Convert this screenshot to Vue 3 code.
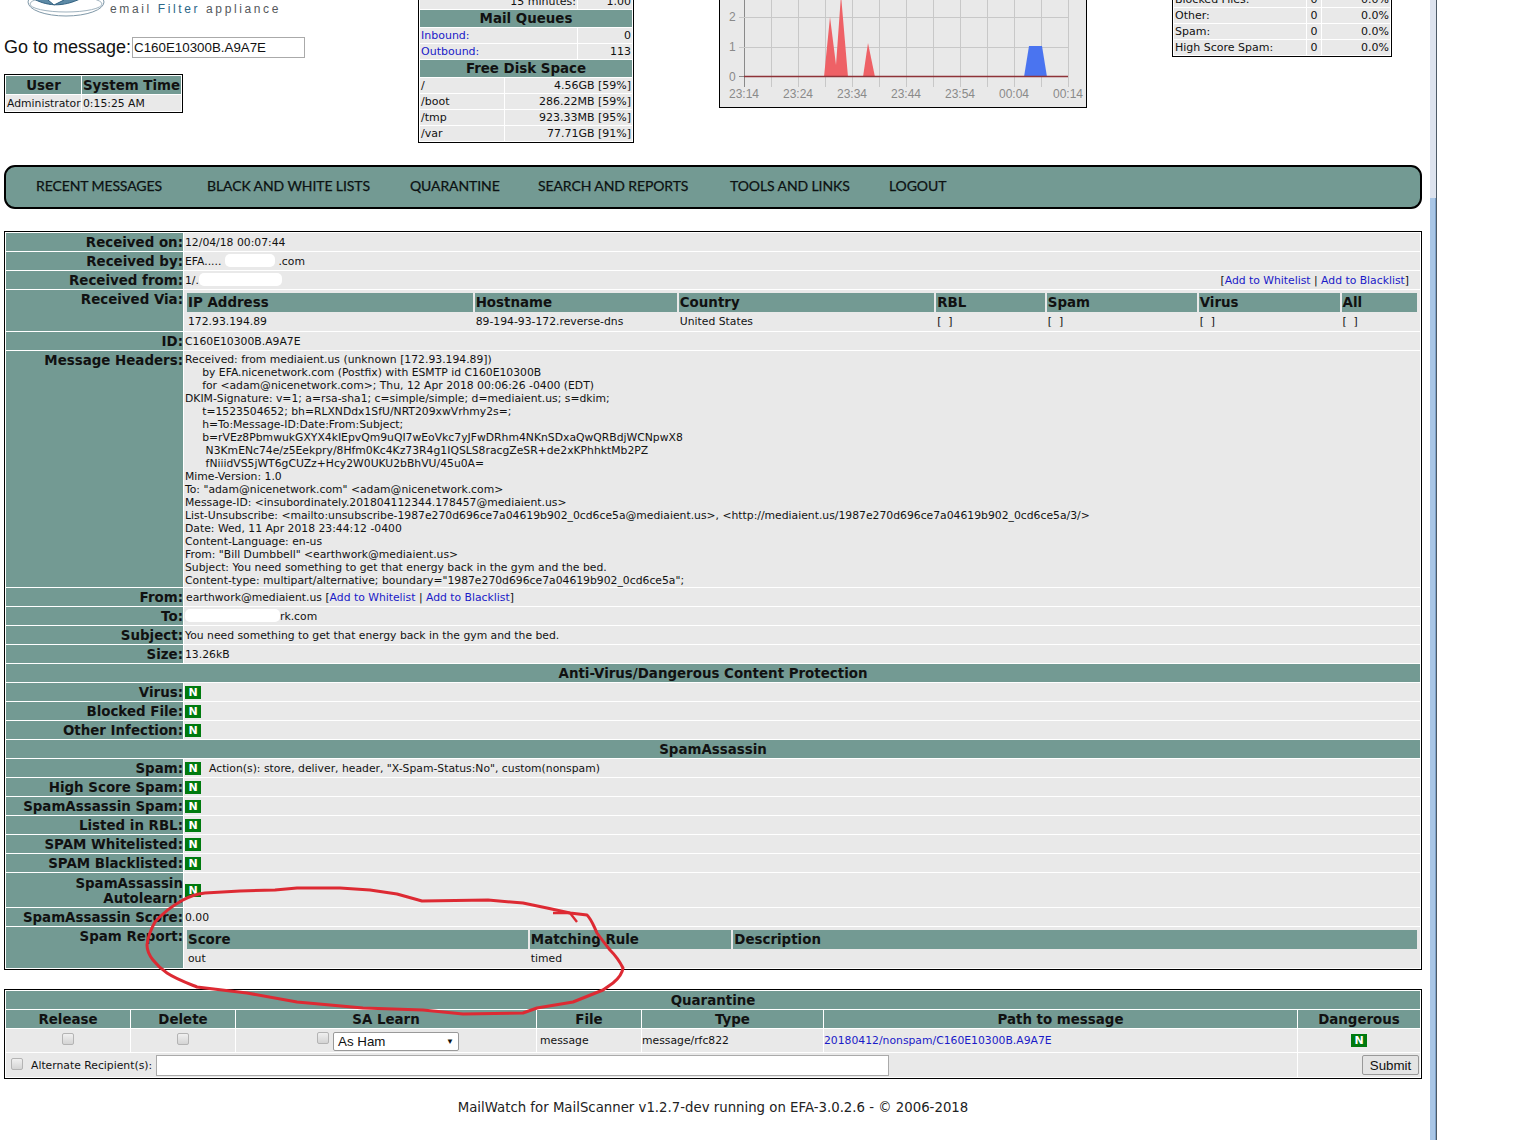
<script setup>
const navItems = ['RECENT MESSAGES', 'BLACK AND WHITE LISTS', 'QUARANTINE', 'SEARCH AND REPORTS', 'TOOLS AND LINKS', 'LOGOUT']
const disks = [['/', '4.56GB [59%]'], ['/boot', '286.22MB [59%]'], ['/tmp', '923.33MB [95%]'], ['/var', '77.71GB [91%]']]
const stats = [['Blocked Files:', '0', '0.0%'], ['Other:', '0', '0.0%'], ['Spam:', '0', '0.0%'], ['High Score Spam:', '0', '0.0%']]
const gridX = Array.from({ length: 13 }, (_, i) => 744.5 + i * 27 - 719)
const times = ['23:14', '23:24', '23:34', '23:44', '23:54', '00:04', '00:14']
const headers = `Received: from mediaient.us (unknown [172.93.194.89])
     by EFA.nicenetwork.com (Postfix) with ESMTP id C160E10300B
     for <adam@nicenetwork.com>; Thu, 12 Apr 2018 00:06:26 -0400 (EDT)
DKIM-Signature: v=1; a=rsa-sha1; c=simple/simple; d=mediaient.us; s=dkim;
     t=1523504652; bh=RLXNDdx1SfU/NRT209xwVrhmy2s=;
     h=To:Message-ID:Date:From:Subject;
     b=rVEz8PbmwukGXYX4kIEpvQm9uQI7wEoVkc7yJFwDRhm4NKnSDxaQwQRBdjWCNpwX8
      N3KmENc74e/z5Eekpry/8Hfm0Kc4Kz73R4g1IQSLS8racgZeSR+de2xKPhhktMb2PZ
      fNiiidVS5jWT6gCUZz+Hcy2W0UKU2bBhVU/45u0A=
Mime-Version: 1.0
To: "adam@nicenetwork.com" <adam@nicenetwork.com>
Message-ID: <insubordinately.201804112344.178457@mediaient.us>
List-Unsubscribe: <mailto:unsubscribe-1987e270d696ce7a04619b902_0cd6ce5a@mediaient.us>, <http://mediaient.us/1987e270d696ce7a04619b902_0cd6ce5a/3/>
Date: Wed, 11 Apr 2018 23:44:12 -0400
Content-Language: en-us
From: "Bill Dumbbell" <earthwork@mediaient.us>
Subject: You need something to get that energy back in the gym and the bed.
Content-type: multipart/alternative; boundary="1987e270d696ce7a04619b902_0cd6ce5a";`
const avRows = ['Virus:', 'Blocked File:', 'Other Infection:']
const saRows = ['High Score Spam:', 'SpamAssassin Spam:', 'Listed in RBL:', 'SPAM Whitelisted:', 'SPAM Blacklisted:']
const viaCols = [
  ['IP Address', '172.93.194.89', 284], ['Hostname', '89-194-93-172.reverse-dns', 201], ['Country', 'United States', 254],
  ['RBL', '[  ]', 108], ['Spam', '[  ]', 149], ['Virus', '[  ]', 140], ['All', '[  ]', 75]
]
const reportCols = [['Score', 'out', 340], ['Matching Rule', 'timed', 201], ['Description', '', 682]]
</script>

<template>
  <div class="screen">
    <div class="page">
      <header class="top">
        <div class="brand">
          <div class="logo">
            <svg class="logo-mark" width="88" height="18" viewBox="0 0 88 18">
              <ellipse cx="42" cy="2" rx="38" ry="14" fill="none" stroke="#7f98a8" stroke-width="1" />
              <ellipse cx="42" cy="4" rx="36" ry="8" fill="none" stroke="#9fb2be" stroke-width="1" />
              <path d="M8 -2 C22 6 38 8 58 -2" fill="#5d8aa6" stroke="#2f5f7f" />
              <path d="M24 0 L30 5 L40 0" fill="#fff" stroke="#2f5f7f" />
            </svg>
            <span class="tagline">email <b>Filter</b> appliance</span>
          </div>
          <div class="goto">
            <span>Go to message:</span>
            <input class="goto-input" value="C160E10300B.A9A7E" readonly />
          </div>
          <table class="box user-box">
            <tbody>
              <tr><th>User</th><th>System Time</th></tr>
              <tr><td>Administrator</td><td>0:15:25 AM</td></tr>
            </tbody>
          </table>
        </div>

        <div class="clip clip-mid">
          <table class="box mid-box">
            <colgroup><col class="c1" /><col class="c2" /><col class="c3" /></colgroup>
            <tbody>
              <tr><td colspan="2" class="right">15 minutes:</td><td class="right">1.00</td></tr>
              <tr><th colspan="3">Mail Queues</th></tr>
              <tr><td colspan="2"><a>Inbound:</a></td><td class="right">0</td></tr>
              <tr><td colspan="2"><a>Outbound:</a></td><td class="right">113</td></tr>
              <tr><th colspan="3">Free Disk Space</th></tr>
              <tr v-for="d in disks" :key="d[0]"><td>{{ d[0] }}</td><td colspan="2" class="right">{{ d[1] }}</td></tr>
            </tbody>
          </table>
        </div>

        <div class="clip clip-chart">
          <svg class="chart" width="368" height="108" viewBox="0 0 368 108">
            <rect x="0.5" y="-2" width="367" height="109.5" fill="#e9e9e9" stroke="#000" />
            <line v-for="x in gridX" :key="x" :x1="x" :x2="x" y1="0" y2="87" stroke="#c8c8c8" />
            <line x1="25.5" x2="25.5" y1="0" y2="87" stroke="#8a8a8a" />
            <line x1="20" x2="349" y1="17.5" y2="17.5" stroke="#c8c8c8" />
            <line x1="20" x2="349" y1="47.5" y2="47.5" stroke="#c8c8c8" />
            <line x1="20" x2="26" y1="76.5" y2="76.5" stroke="#8a8a8a" />
            <polygon points="105,77 111,17 117,65 122,-5 129,77" fill="#ee6166" />
            <polygon points="144,77 149,43 156,77" fill="#ee6166" />
            <polygon points="305,77 310,46 323,46 328,77" fill="#4a74f0" />
            <line x1="25" x2="349" y1="76.5" y2="76.5" stroke="#8e3338" stroke-width="1.4" />
            <text x="10" y="21" class="tick">2</text>
            <text x="10" y="51" class="tick">1</text>
            <text x="10" y="81" class="tick">0</text>
            <text v-for="(t, i) in times" :key="t" :x="10 + i * 54" y="98" class="tick">{{ t }}</text>
          </svg>
        </div>

        <div class="clip clip-right">
          <table class="box right-box">
            <colgroup><col class="r1" /><col class="r2" /><col class="r3" /></colgroup>
            <tbody>
              <tr v-for="s in stats" :key="s[0]"><td>{{ s[0] }}</td><td class="center">{{ s[1] }}</td><td class="right">{{ s[2] }}</td></tr>
            </tbody>
          </table>
        </div>
      </header>

      <nav class="nav">
        <span v-for="n in navItems" :key="n">{{ n }}</span>
      </nav>

      <table class="box main">
        <colgroup><col class="lab" /><col /></colgroup>
        <tbody>
          <tr><th>Received on:</th><td>12/04/18 00:07:44</td></tr>
          <tr><th>Received by:</th><td>EFA.....<i class="blot b1"></i>.com</td></tr>
          <tr><th>Received from:</th><td><div class="split"><span>1/.<i class="blot b2"></i></span><span class="wl">[<a>Add to Whitelist</a> | <a>Add to Blacklist</a>]</span></div></td></tr>
          <tr>
            <th>Received Via:</th>
            <td class="nest via-cell">
              <table class="inner">
                <colgroup><col v-for="c in viaCols" :key="c[0]" :style="{ width: c[2] + 'px' }" /></colgroup>
                <tbody>
                  <tr><th v-for="c in viaCols" :key="c[0]">{{ c[0] }}</th></tr>
                  <tr class="short"><td v-for="c in viaCols" :key="c[0]">{{ c[1] }}</td></tr>
                </tbody>
              </table>
            </td>
          </tr>
          <tr><th>ID:</th><td>C160E10300B.A9A7E</td></tr>
          <tr><th>Message Headers:</th><td class="headers">{{ headers }}</td></tr>
          <tr><th>From:</th><td><span class="from">earthwork@mediaient.us [<a>Add to Whitelist</a> | <a>Add to Blacklist</a>]</span></td></tr>
          <tr><th>To:</th><td><i class="blot b3"></i>rk.com</td></tr>
          <tr><th>Subject:</th><td>You need something to get that energy back in the gym and the bed.</td></tr>
          <tr><th>Size:</th><td>13.26kB</td></tr>
          <tr><th colspan="2" class="sect">Anti-Virus/Dangerous Content Protection</th></tr>
          <tr v-for="r in avRows" :key="r"><th>{{ r }}</th><td><span class="badge">N</span></td></tr>
          <tr><th colspan="2" class="sect">SpamAssassin</th></tr>
          <tr><th>Spam:</th><td><span class="badge">N</span><span class="action">Action(s): store, deliver, header, "X-Spam-Status:No", custom(nonspam)</span></td></tr>
          <tr v-for="r in saRows" :key="r"><th>{{ r }}</th><td><span class="badge">N</span></td></tr>
          <tr class="tall"><th>SpamAssassin Autolearn:</th><td><span class="badge">N</span></td></tr>
          <tr><th>SpamAssassin Score:</th><td>0.00</td></tr>
          <tr>
            <th>Spam Report:</th>
            <td class="nest report-cell">
              <table class="inner">
                <colgroup><col v-for="c in reportCols" :key="c[0]" :style="{ width: c[2] + 'px' }" /></colgroup>
                <tbody>
                  <tr><th v-for="c in reportCols" :key="c[0]">{{ c[0] }}</th></tr>
                  <tr><td v-for="c in reportCols" :key="c[0]">{{ c[1] }}</td></tr>
                </tbody>
              </table>
            </td>
          </tr>
        </tbody>
      </table>

      <table class="box quar">
        <colgroup>
          <col class="q1" /><col class="q2" /><col class="q3" /><col class="q4" /><col class="q5" /><col class="q6" /><col />
        </colgroup>
        <tbody>
          <tr><th colspan="7">Quarantine</th></tr>
          <tr><th>Release</th><th>Delete</th><th>SA Learn</th><th>File</th><th>Type</th><th>Path to message</th><th>Dangerous</th></tr>
          <tr class="data">
            <td class="center"><span class="check"></span></td>
            <td class="center"><span class="check"></span></td>
            <td>
              <div class="learn"><span class="check"></span><div class="select"><span>As Ham</span><span class="arrow">▼</span></div></div>
            </td>
            <td class="file">message</td>
            <td>message/rfc822</td>
            <td><a>20180412/nonspam/C160E10300B.A9A7E</a></td>
            <td class="center"><span class="badge">N</span></td>
          </tr>
          <tr class="last">
            <td colspan="6">
              <div class="alt"><span class="check"></span><span class="alt-label">Alternate Recipient(s):</span><input class="alt-input" readonly /></div>
            </td>
            <td class="right"><button class="submit" type="button">Submit</button></td>
          </tr>
        </tbody>
      </table>

      <footer class="foot">MailWatch for MailScanner v1.2.7-dev running on EFA-3.0.2.6 - © 2006-2018</footer>
    </div>
    <div class="scrollbar"><div class="thumb"></div></div>

    <svg class="scribble" width="700" height="160" viewBox="130 880 700 160">
      <path d="M183 900 C190 896 197 894 205 893 L240 891 L275 890 L297 888 L340 888 L370 890 L397 894 L422 901 L488 900 L523 903 L547 908 L570 913 L587 915 C592 920 594 927 597 933 C602 940 606 945 610 950 C616 956 620 962 623 968 C622 975 618 979 613 983 L603 990 L573 1002 L537 1008 L523 1013 L463 1014 L423 1010 L363 1008 L297 1002 L247 993 L197 987 C187 983 176 979 167 973 C161 969 157 965 153 960 C149 955 147 950 147 945 C148 937 151 929 155 922 C162 914 172 906 183 900 Z" fill="none" stroke="#dd2a33" stroke-width="3" stroke-linejoin="round" />
      <path d="M553 913 L570 913 L577 922" fill="none" stroke="#dd2a33" stroke-width="2.4" />
    </svg>
  </div>
</template>

<style>
html, body { margin: 0; background: #fff; }
</style>

<style scoped>
.screen {
  position: relative;
  display: flex;
  width: 1536px;
  height: 1140px;
  overflow: hidden;
  background: #fff;
  font-family: "DejaVu Sans", Verdana, sans-serif;
  font-size: 10.8px;
  color: #111;
}
.page { width: 1426px; margin-left: 4px; flex: none; }
.scrollbar {
  flex: none;
  width: 6px;
  height: 1140px;
  background: #dde3ee;
  border-right: 1px solid #4d5a66;
}
.thumb { margin-top: 198px; height: 942px; background: #a9c6e6; border-right: 1px solid #7ea1c8; box-sizing: border-box; }

table { border-collapse: separate; }
th, td { padding: 0; }
a { color: #1a1ac8; }
.right { text-align: right; }
.center { text-align: center; }

.top { display: flex; height: 165px; align-items: flex-start; }
.brand { width: 414px; flex: none; height: 165px; }
.logo { height: 18px; display: flex; overflow: hidden; margin-left: 20px; }
.logo-mark { flex: none; }
.tagline {
  margin-left: -2px;
  margin-top: 2px;
  font-family: "Liberation Sans", Arial, sans-serif;
  font-size: 12px;
  letter-spacing: 2.62px;
  color: #55585c;
  white-space: nowrap;
  line-height: 14px;
}
.tagline b { font-weight: 400; color: #2c6788; }
.goto {
  margin-top: 19px;
  display: flex;
  align-items: center;
  gap: 1px;
  font-family: "Liberation Sans", Arial, sans-serif;
  font-size: 18px;
}
.goto-input {
  width: 173px;
  height: 21px;
  box-sizing: border-box;
  border: 1px solid #aaa;
  padding: 0 1px;
  font-family: "Liberation Sans", Arial, sans-serif;
  font-size: 13.33px;
  color: #111;
  outline: none;
}

.box { border: 1px solid #000; border-spacing: 1px; background: #fff; }
.box th { background: #739a93; }
.box td { background: #e9e9e9; }

.user-box { margin-top: 16px; width: 179px; table-layout: fixed; }
.user-box th { font-size: 13.4px; height: 18px; }
.user-box td { height: 15px; padding: 1px 0 0 1px; white-space: nowrap; }
.user-box th:first-child { width: 75px; }

.clip { flex: none; display: flex; flex-direction: column; justify-content: flex-end; overflow: hidden; }
.clip-mid { width: 216px; height: 143px; }
.mid-box { width: 216px; table-layout: fixed; }
.mid-box th { font-size: 13.4px; height: 17px; }
.mid-box td { height: 15px; padding: 0 1px; font-size: 11px; line-height: 15px; }
.mid-box .c1 { width: 84px; }
.mid-box .c2 { width: 72px; }
.clip-chart { width: 368px; height: 108px; margin-left: 85px; }
.tick { font-family: "Liberation Sans", Arial, sans-serif; font-size: 12px; fill: #8a8a8a; }
.clip-right { width: 220px; height: 57px; margin-left: 85px; }
.right-box { width: 220px; table-layout: fixed; }
.right-box td { height: 14px; padding: 1px 1px 0; line-height: 14px; font-size: 11px; }
.right-box .r1 { width: 132px; }
.right-box .r2 { width: 14px; }

.nav {
  height: 44px;
  box-sizing: border-box;
  width: 1418px;
  background: #739a93;
  border: 2px solid #000;
  border-radius: 11px;
  padding: 0 0 4px 30px;
  display: grid;
  grid-template-columns: 171px 203px 128px 192px 159px auto;
  align-items: center;
  font-family: Lato, "Open Sans", sans-serif;
  font-size: 14px;
  letter-spacing: -0.1px;
  -webkit-text-stroke: 0.25px #0c1212;
  color: #0c1212;
  white-space: nowrap;
}

.main { margin-top: 22px; width: 1418px; table-layout: fixed; }
.main .lab { width: 177px; }
.main > tbody > tr > th {
  height: 18px;
  font-size: 13.4px;
  line-height: 16px;
  text-align: right;
  vertical-align: top;
  padding-top: 2px;
  box-sizing: border-box;
}
.main > tbody > tr > td {
  height: 18px;
  padding: 0 0 0 1px;
  box-sizing: border-box;
  line-height: 17px;
  vertical-align: middle;
}
.main > tbody > tr > th.sect { text-align: center; }
.main > tbody > tr.tall > th { height: 34px; padding-top: 3px; line-height: 15px; }
.split { display: flex; justify-content: space-between; padding-right: 11px; }
.blot {
  display: inline-block;
  background: #fff;
  height: 13px;
  vertical-align: -2px;
  border-radius: 5px;
}
.b1 { width: 50px; margin: 0 3px 0 4px; }
.b2 { width: 83px; }
.b3 { width: 95px; }
.from { margin-left: 1px; }
.main > tbody > tr > td.headers {
  white-space: pre;
  line-height: 13px;
  height: 236px;
  padding-top: 2px;
  vertical-align: top;
}
.main > tbody > tr > td.nest { vertical-align: top; }
.main > tbody > tr > td.via-cell { height: 41px; padding-top: 3px; }
.main > tbody > tr > td.report-cell { height: 41px; padding-top: 3px; }
.inner { border-spacing: 2px 0; table-layout: fixed; width: 1234px; }
.inner th { background: #739a93; text-align: left; font-size: 13.4px; height: 19px; padding-left: 1px; line-height: 19px; }
.inner td { background: #e9e9e9; height: 19px; padding-left: 1px; white-space: pre; }
.inner .short td { height: 18px; }
.badge {
  display: inline-block;
  width: 16px;
  height: 13px;
  line-height: 13px;
  background: #007a0f;
  color: #fff;
  font-weight: 700;
  font-size: 11px;
  text-align: center;
  vertical-align: middle;
}
.action { margin-left: 8px; }

.quar { margin-top: 19px; width: 1418px; table-layout: fixed; }
.quar .q1 { width: 124px; }
.quar .q2 { width: 104px; }
.quar .q3 { width: 300px; }
.quar .q4 { width: 104px; }
.quar .q5 { width: 181px; }
.quar .q6 { width: 473px; }
.quar th { height: 17px; padding-top: 1px; font-size: 13.4px; line-height: 17px; text-align: center; }
.quar .file { padding-left: 3px; }
.quar .data td { height: 23px; box-sizing: border-box; }
.quar .last td { height: 24px; box-sizing: border-box; padding-right: 1px; }
.check {
  display: inline-block;
  width: 12px;
  height: 12px;
  box-sizing: border-box;
  border: 1px solid #b4b4b4;
  border-radius: 2px;
  background: linear-gradient(#f0f0f0, #d4d4d4);
}
.learn { display: flex; align-items: flex-start; justify-content: flex-end; padding-right: 77px; gap: 4px; margin-top: 1px; }
.select {
  width: 126px;
  height: 19px;
  box-sizing: border-box;
  border: 1px solid #999;
  border-radius: 2px;
  background: #fff;
  display: flex;
  justify-content: space-between;
  align-items: center;
  padding: 0 4px;
  font-family: "Liberation Sans", Arial, sans-serif;
  font-size: 13.33px;
}
.arrow { font-size: 8px; }
.alt { display: flex; align-items: center; padding-left: 5px; }
.alt .check { margin-top: -3px; }
.alt-label { margin-left: 8px; margin-right: 4px; }
.alt-input { width: 733px; height: 21px; box-sizing: border-box; border: 1px solid #aaa; outline: none; padding: 0; }
.submit {
  width: 57px;
  height: 20px;
  padding: 0;
  border: 1px solid #999;
  border-radius: 2px;
  background: #e4e4e4;
  font-family: "Liberation Sans", Arial, sans-serif;
  font-size: 13.33px;
  color: #111;
}
.foot { margin-top: 21px; width: 1418px; text-align: center; font-size: 13.3px; line-height: 15px; color: #222; }

.scribble { position: absolute; left: 130px; top: 880px; pointer-events: none; }
</style>
